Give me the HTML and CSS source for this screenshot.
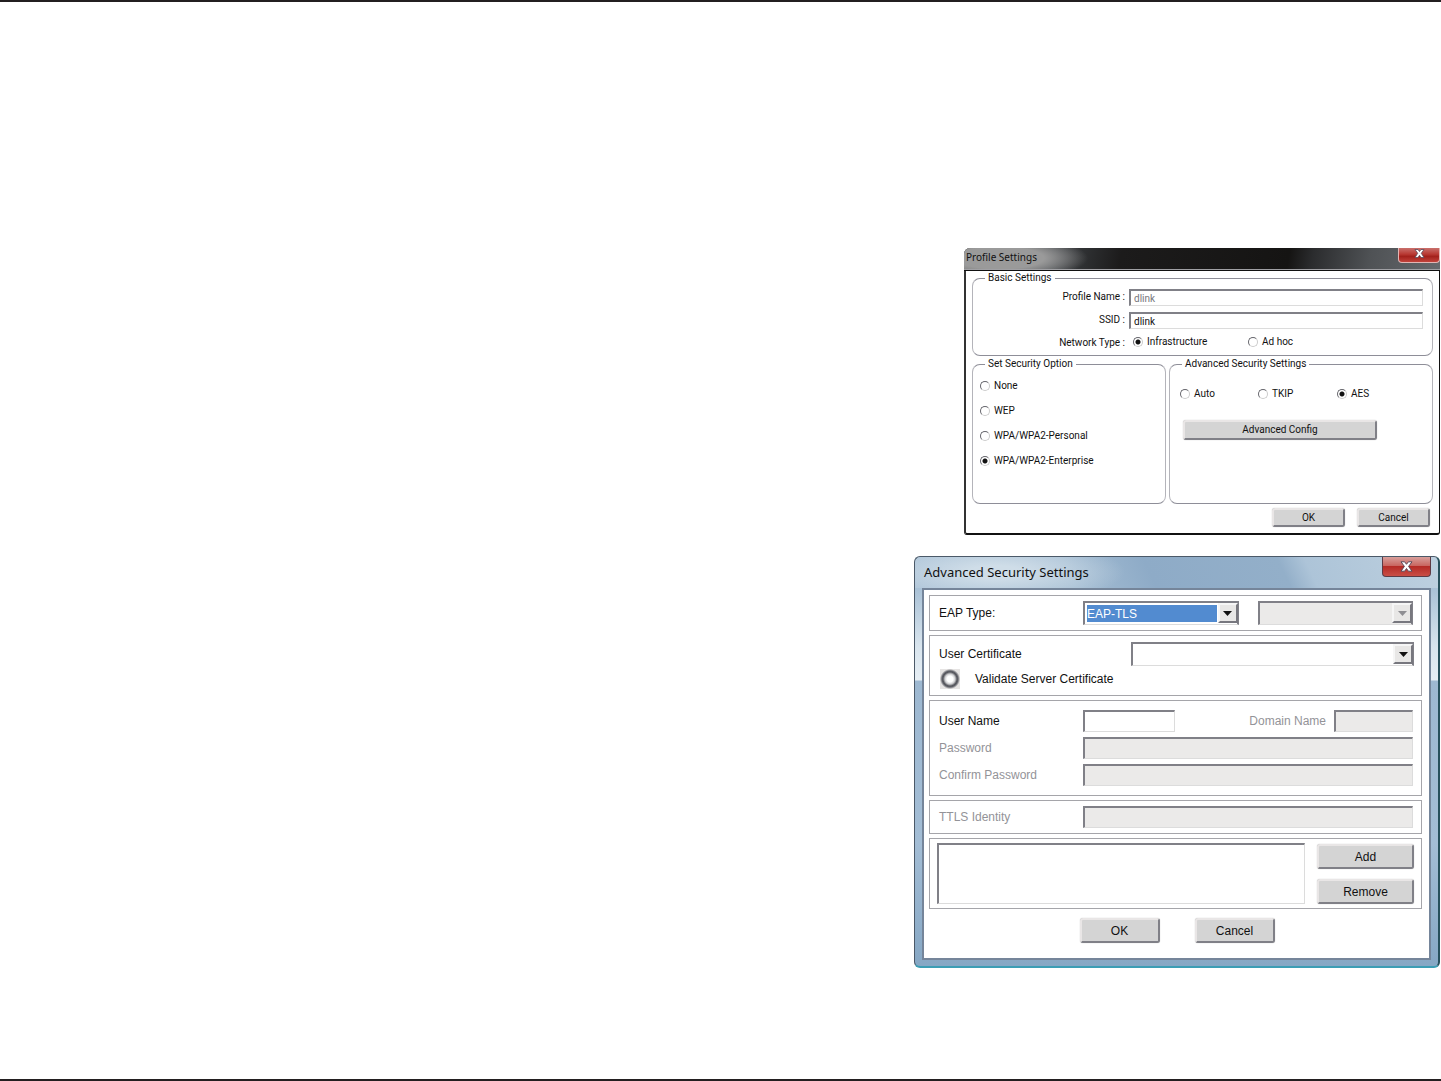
FILE: index.html
```html
<!DOCTYPE html>
<html lang="en">
<head>
<meta charset="utf-8">
<title>Profile Settings</title>
<link rel="stylesheet" href="styles.css">
</head>
<body>
<main class="page">
  <form class="profile" aria-labelledby="profile-title">
    <header class="profile-bar">
      <h1 class="profile-title" id="profile-title">Profile Settings</h1>
      <button class="close close-small" type="button" aria-label="Close">
        <svg width="11" height="9" viewBox="0 0 11 9"><path d="M1 .5h3l1.500 2L7 .5h3L7.300 4.300 10 8.500H7L5.500 6.300 4 8.500H1l2.700-4.200z" fill="#fff" stroke="#5b4a5a" stroke-width=".8"/></svg>
      </button>
    </header>
    <div class="profile-body">
      <fieldset class="group basic">
        <legend>Basic Settings</legend>
        <label class="basic-label" for="pname">Profile Name :</label>
        <input class="field field-small muted" id="pname" type="text" value="dlink">
        <label class="basic-label" for="ssid">SSID :</label>
        <input class="field field-small" id="ssid" type="text" value="dlink">
        <span class="basic-label">Network Type :</span>
        <div class="network">
          <label class="option"><input class="radio" type="radio" name="net" checked>Infrastructure</label>
          <label class="option"><input class="radio" type="radio" name="net">Ad hoc</label>
        </div>
      </fieldset>
      <div class="security">
        <fieldset class="group modes">
          <legend>Set Security Option</legend>
          <label class="option"><input class="radio" type="radio" name="mode">None</label>
          <label class="option"><input class="radio" type="radio" name="mode">WEP</label>
          <label class="option"><input class="radio" type="radio" name="mode">WPA/WPA2-Personal</label>
          <label class="option"><input class="radio" type="radio" name="mode" checked>WPA/WPA2-Enterprise</label>
        </fieldset>
        <fieldset class="group ciphers">
          <legend>Advanced Security Settings</legend>
          <div class="cipher-row">
            <label class="option"><input class="radio" type="radio" name="cipher">Auto</label>
            <label class="option"><input class="radio" type="radio" name="cipher">TKIP</label>
            <label class="option"><input class="radio" type="radio" name="cipher" checked>AES</label>
          </div>
          <button class="button config" type="button">Advanced Config</button>
        </fieldset>
      </div>
      <footer class="profile-actions">
        <button class="button" type="button">OK</button>
        <button class="button" type="button">Cancel</button>
      </footer>
    </div>
  </form>

  <form class="advanced" aria-labelledby="advanced-title">
    <header class="advanced-bar">
      <h2 class="advanced-title" id="advanced-title">Advanced Security Settings</h2>
      <button class="close close-large" type="button" aria-label="Close">
        <svg width="13" height="11" viewBox="0 0 13 11"><path d="M1 .8h3.600l1.900 2.500L8.400.8H12L8.600 5.400l3.400 4.800H8.400L6.500 7.500l-1.900 2.700H1l3.400-4.800z" fill="#fff" stroke="#5b4a5a"/></svg>
      </button>
    </header>
    <div class="panel">
      <section class="box eap">
        <label for="eap">EAP Type:</label>
        <div class="combo">
          <select class="field select selected" id="eap"><option>EAP-TLS</option></select>
          <span class="arrow"><svg width="9" height="5" viewBox="0 0 9 5"><path d="M0 0h9L4.500 5z" fill="#111"/></svg></span>
        </div>
        <div class="combo">
          <select class="field select" aria-label="Inner method" disabled><option></option></select>
          <span class="arrow"><svg width="9" height="5" viewBox="0 0 9 5"><path d="M0 0h9L4.500 5z" fill="#8f8f93"/></svg></span>
        </div>
      </section>
      <section class="box certificate">
        <div class="cert-row">
          <label for="cert">User Certificate</label>
          <div class="combo">
            <select class="field select" id="cert"><option></option></select>
            <span class="arrow"><svg width="9" height="5" viewBox="0 0 9 5"><path d="M0 0h9L4.500 5z" fill="#111"/></svg></span>
          </div>
        </div>
        <label class="validate"><input class="ring" type="checkbox">Validate Server Certificate</label>
      </section>
      <section class="box account">
        <label for="user">User Name</label>
        <div class="user-row">
          <input class="field user" id="user" type="text">
          <label class="off domain-label" for="domain">Domain Name</label>
          <input class="field domain" id="domain" type="text" disabled>
        </div>
        <label class="off" for="pass">Password</label>
        <input class="field" id="pass" type="password" disabled>
        <label class="off" for="confirm">Confirm Password</label>
        <input class="field" id="confirm" type="password" disabled>
      </section>
      <section class="box identity">
        <label class="off" for="ttls">TTLS Identity</label>
        <input class="field" id="ttls" type="text" disabled>
      </section>
      <section class="box servers">
        <textarea class="field list" aria-label="Servers"></textarea>
        <div class="server-buttons">
          <button class="button" type="button">Add</button>
          <button class="button" type="button">Remove</button>
        </div>
      </section>
      <footer class="advanced-actions">
        <button class="button" type="button">OK</button>
        <button class="button" type="button">Cancel</button>
      </footer>
    </div>
  </form>
</main>
</body>
</html>
```
FILE: styles.css
```css
* {
  box-sizing: border-box;
}

body {
  margin: 0;
  background: #fff;
  color: #111;
  font-family: "Liberation Sans", sans-serif;
}

button, input, select, textarea {
  margin: 0;
  font: inherit;
  color: inherit;
}

.page {
  display: flex;
  flex-direction: column;
  align-items: flex-end;
  gap: 21px;
  min-height: 100vh;
  padding: 246px 1px 0 0;
  border-top: 2px solid #231f20;
  border-bottom: 2px solid #231f20;
}

/* Shared controls */

.field {
  display: block;
  width: 100%;
  min-width: 0;
  height: 22px;
  padding: 0 4px;
  border: 1px solid #dcdcdc;
  border-top: 2px solid #808087;
  border-left: 2px solid #808087;
  border-radius: 0;
  background: #fff;
  outline: 0;
}

.field:disabled {
  background: #ebeae9;
  opacity: 1;
}

.button {
  padding: 0;
  border: 2px solid;
  border-color: #e9e6e6 #808087 #808087 #e9e6e6;
  border-radius: 3px;
  background: #d4d4d4;
  box-shadow: 0 0 1px #aaa;
}

.close {
  display: flex;
  align-items: center;
  justify-content: center;
  padding: 0;
  border: 1px solid #e3b5b3;
  border-top: 0;
  border-radius: 0 0 4px 4px;
}

.close-small {
  width: 42px;
  height: 15px;
  padding-bottom: 3px;
  background: linear-gradient(#c9706c, #b83832 45%, #a3211c 60%, #c2423b);
}

.close-large {
  width: 49px;
  height: 20px;
  border-color: #5d3a44;
  background: linear-gradient(#d9a09c, #c96761 45%, #b52b26 50%, #c94e46);
}

/* Profile Settings */

.profile {
  width: min(476px, 100%);
  border: solid #111;
  border-width: 0 1px 2px 2px;
  border-left-color: #333;
  border-radius: 6px 6px 3px 3px;
  font-family: Roboto, sans-serif;
  font-size: 10px;
  line-height: 12px;
}

.profile-bar {
  display: flex;
  align-items: flex-start;
  justify-content: space-between;
  height: 23px;
  margin: 0 -1px 0 -2px;
  padding-left: 2px;
  border-bottom: 1px solid #111;
  border-radius: 6px 6px 0 0;
  background:
    linear-gradient(#a0a0a4, #a0a0a4) 0 100% / 100% 1px no-repeat,
    radial-gradient(ellipse 88px 22px at 36px 10px, #9a9a9a 50%, transparent),
    linear-gradient(100deg, #666 0, #4b4e52 18%, #2f3133 25%, #1c1b1b 33%, #151413 68%, #2b2c2e 73%, #4f5255 85%, #66696d);
}

.profile-title {
  margin: 0;
  padding-top: 1px;
  font-family: "Noto Sans", sans-serif;
  font-size: 10px;
  font-weight: 400;
  line-height: 16px;
}

.profile-body {
  padding: 1px 6px 6px;
}

.group {
  min-width: 0;
  margin: 0;
  border: 1px solid #8e8e98;
  border-right-color: #b4b4ba;
  border-left-color: #b4b4ba;
  border-radius: 8px;
}

.group legend {
  padding: 0 3px;
}

.basic {
  display: grid;
  grid-template-columns: 152px 1fr;
  gap: 6px 4px;
  padding: 5px 9px 6px 0;
}

.basic legend {
  margin-left: 12px;
}

.basic-label {
  padding-top: 1px;
  line-height: 13px;
  text-align: right;
}

.field-small {
  height: 17px;
  padding: 0 3px;
}

.muted {
  color: #77777b;
}

.network {
  display: grid;
  grid-template-columns: 115px 1fr;
  padding-left: 4px;
}

.option {
  display: flex;
  align-items: center;
  gap: 4px;
}

.radio {
  flex: none;
  width: 10px;
  height: 10px;
  border: 1px solid;
  border-color: #66666c #ccc #ccc #66666c;
  border-radius: 50%;
  background: #fff;
  appearance: none;
}

.radio:checked {
  background: radial-gradient(circle, #111 2px, #fff 3px);
}

.security {
  display: grid;
  grid-template-columns: 194px 1fr;
  gap: 3px;
  padding-top: 2px;
}

.modes {
  padding: 3px 7px 30px;
}

.modes legend {
  margin-left: 5px;
}

.modes .option {
  height: 25px;
}

.ciphers {
  padding: 18px 10px;
}

.ciphers legend {
  margin-left: 2px;
}

.cipher-row {
  display: grid;
  grid-template-columns: 78px 79px 1fr;
}

.config {
  display: block;
  width: 194px;
  height: 20px;
  margin: 20px 0 0 3px;
}

.profile-actions {
  display: flex;
  justify-content: flex-end;
  gap: 12px;
  padding: 4px 3px 0 0;
}

.profile-actions .button {
  width: 73px;
  height: 19px;
}

/* Advanced Security Settings */

.advanced {
  width: min(526px, 100%);
  padding: 0 7px 6px;
  border: 1px solid #4b5968;
  border-right: 2px solid #27505c;
  border-bottom: 2px solid #3c9db4;
  border-radius: 6px;
  background:
    radial-gradient(ellipse 130px 32px at 80px 15px, #cfdde8 20%, transparent) 0 0 / 100% 31px no-repeat,
    linear-gradient(65deg, #a9c1d6 0, #a4bdd3 30%, #8eabc7 45%, #93afc9 70%, #adc4d8 75%, #bdd0df) 0 0 / 100% 31px no-repeat,
    linear-gradient(#a9c1d6 31px, #d9e5ee 90px, #e6eef4 123px, #9db8d1 124px, #a3bdd5 70%, #86a7c4);
  font-size: 12px;
  line-height: 16px;
}

.advanced-bar {
  display: flex;
  align-items: flex-start;
  justify-content: space-between;
  height: 31px;
  padding-left: 2px;
}

.advanced-title {
  margin: 0;
  padding-top: 5px;
  font-family: "Noto Sans", sans-serif;
  font-size: 13px;
  font-weight: 400;
  line-height: 20px;
}

.panel {
  display: flex;
  flex-direction: column;
  gap: 4px;
  padding: 5px 7px 15px 5px;
  border: 2px solid #75859a;
  background: #fff;
}

.box {
  border: 1px solid #a5a5aa;
}

.off {
  color: #939398;
}

.combo {
  display: grid;
}

.select,
.arrow {
  grid-area: 1 / 1;
}

.select {
  height: 24px;
  padding: 1px 20px 1px 2px;
  border-right: 2px solid #808087;
  appearance: none;
}

.selected {
  padding: 2px 20px 2px 2px;
  background: #528bd0 content-box;
  color: #fff;
}

.arrow {
  display: flex;
  align-items: center;
  justify-content: center;
  justify-self: end;
  width: 20px;
  height: 20px;
  margin: 2px 1px 0 0;
  border: 2px solid;
  border-color: #f6f6f6 #77777e #77777e #f6f6f6;
  background: #e8e7e6;
  pointer-events: none;
}

.eap {
  display: grid;
  grid-template-columns: 125px 1fr 1fr;
  align-items: center;
  column-gap: 19px;
  padding: 5px 8px 5px 9px;
}

.certificate {
  padding: 6px 7px 6px 9px;
}

.cert-row {
  display: grid;
  grid-template-columns: 192px 1fr;
  align-items: center;
}

.validate {
  display: flex;
  align-items: center;
  gap: 15px;
  padding: 3px 0 0 1px;
}

.ring {
  width: 20px;
  height: 20px;
  background: radial-gradient(circle at 10px 10px, #fff 3px, #d0d0d2 5px, #55565c 7px, #606168 8px, #e6e4e3 10px);
  appearance: none;
}

.account {
  display: grid;
  grid-template-columns: 144px 1fr;
  align-items: center;
  row-gap: 5px;
  padding: 9px 8px 9px 9px;
}

.user-row {
  display: flex;
  align-items: center;
}

.user {
  width: 92px;
}

.domain-label {
  margin: 0 8px 0 auto;
}

.domain {
  width: 79px;
}

.identity {
  display: grid;
  grid-template-columns: 144px 1fr;
  align-items: center;
  padding: 5px 8px 5px 9px;
}

.servers {
  display: grid;
  grid-template-columns: 1fr 97px;
  gap: 12px;
  padding: 4px 7px;
}

.list {
  height: 61px;
  resize: none;
}

.server-buttons {
  display: flex;
  flex-direction: column;
  justify-content: space-between;
  padding-top: 1px;
}

.server-buttons .button {
  height: 25px;
}

.advanced-actions {
  display: flex;
  justify-content: center;
  gap: 35px;
  padding: 5px 0 0 3px;
}

.advanced-actions .button {
  width: 80px;
  height: 25px;
}
```
